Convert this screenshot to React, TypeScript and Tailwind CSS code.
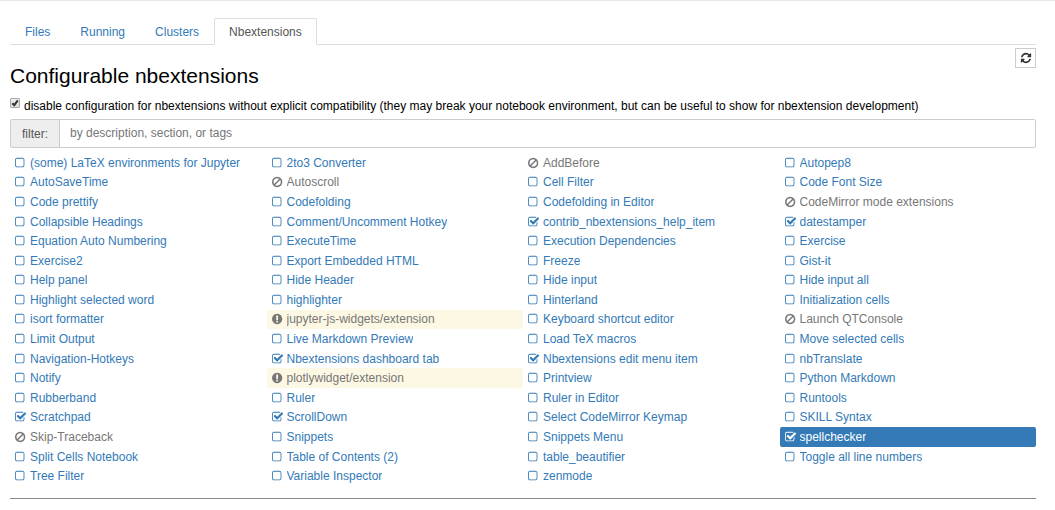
import { useState } from 'react';
import clsx from 'clsx';

type Status = 'off' | 'on' | 'incompatible' | 'missing';

interface Extension {
  name: string;
  status?: Status;
}

const tabs = ['Files', 'Running', 'Clusters', 'Nbextensions'];

// listed row by row, four to a row
const extensions: Extension[] = [
  { name: '(some) LaTeX environments for Jupyter' },
  { name: '2to3 Converter' },
  { name: 'AddBefore', status: 'incompatible' },
  { name: 'Autopep8' },
  { name: 'AutoSaveTime' },
  { name: 'Autoscroll', status: 'incompatible' },
  { name: 'Cell Filter' },
  { name: 'Code Font Size' },
  { name: 'Code prettify' },
  { name: 'Codefolding' },
  { name: 'Codefolding in Editor' },
  { name: 'CodeMirror mode extensions', status: 'incompatible' },
  { name: 'Collapsible Headings' },
  { name: 'Comment/Uncomment Hotkey' },
  { name: 'contrib_nbextensions_help_item', status: 'on' },
  { name: 'datestamper', status: 'on' },
  { name: 'Equation Auto Numbering' },
  { name: 'ExecuteTime' },
  { name: 'Execution Dependencies' },
  { name: 'Exercise' },
  { name: 'Exercise2' },
  { name: 'Export Embedded HTML' },
  { name: 'Freeze' },
  { name: 'Gist-it' },
  { name: 'Help panel' },
  { name: 'Hide Header' },
  { name: 'Hide input' },
  { name: 'Hide input all' },
  { name: 'Highlight selected word' },
  { name: 'highlighter' },
  { name: 'Hinterland' },
  { name: 'Initialization cells' },
  { name: 'isort formatter' },
  { name: 'jupyter-js-widgets/extension', status: 'missing' },
  { name: 'Keyboard shortcut editor' },
  { name: 'Launch QTConsole', status: 'incompatible' },
  { name: 'Limit Output' },
  { name: 'Live Markdown Preview' },
  { name: 'Load TeX macros' },
  { name: 'Move selected cells' },
  { name: 'Navigation-Hotkeys' },
  { name: 'Nbextensions dashboard tab', status: 'on' },
  { name: 'Nbextensions edit menu item', status: 'on' },
  { name: 'nbTranslate' },
  { name: 'Notify' },
  { name: 'plotlywidget/extension', status: 'missing' },
  { name: 'Printview' },
  { name: 'Python Markdown' },
  { name: 'Rubberband' },
  { name: 'Ruler' },
  { name: 'Ruler in Editor' },
  { name: 'Runtools' },
  { name: 'Scratchpad', status: 'on' },
  { name: 'ScrollDown', status: 'on' },
  { name: 'Select CodeMirror Keymap' },
  { name: 'SKILL Syntax' },
  { name: 'Skip-Traceback', status: 'incompatible' },
  { name: 'Snippets' },
  { name: 'Snippets Menu' },
  { name: 'spellchecker', status: 'on' },
  { name: 'Split Cells Notebook' },
  { name: 'Table of Contents (2)' },
  { name: 'table_beautifier' },
  { name: 'Toggle all line numbers' },
  { name: 'Tree Filter' },
  { name: 'Variable Inspector' },
  { name: 'zenmode' },
];

const iconPaths: Record<Status, string> = {
  off: 'M1312 256h-832q-66 0-113 47t-47 113v832q0 66 47 113t113 47h832q66 0 113-47t47-113v-832q0-66-47-113t-113-47zm288 160v832q0 119-84.5 203.5t-203.5 84.5h-832q-119 0-203.5-84.5t-84.5-203.5v-832q0-119 84.5-203.5t203.5-84.5h832q119 0 203.5 84.5t84.5 203.5z',
  on: 'M1472 930v318q0 119-84.5 203.5t-203.5 84.5h-832q-119 0-203.5-84.5t-84.5-203.5v-832q0-119 84.5-203.5t203.5-84.5h832q63 0 117 25 15 7 18 23 3 17-9 29l-49 49q-10 10-23 10-3 0-9-2-23-6-45-6h-832q-66 0-113 47t-47 113v832q0 66 47 113t113 47h832q66 0 113-47t47-113v-254q0-13 9-22l64-64q10-10 23-10 6 0 12 3 20 8 20 29zm231-489l-814 814q-24 24-57 24t-57-24l-430-430q-24-24-24-57t24-57l110-110q24-24 57-24t57 24l263 263 647-647q24-24 57-24t57 24l110 110q24 24 24 57t-24 57z',
  incompatible:
    'M1440 893q0-161-87-295l-754 753q137 89 297 89 111 0 211.5-43.5t173.5-116.5 116-174.5 43-212.5zm-999 299l755-754q-135-91-300-91-148 0-273 73t-198 199-73 274q0 162 89 299zm1223-299q0 157-61 300t-163.5 246-245 164-298.5 61-298.5-61-245-164-163.5-246-61-300 61-299.5 163.5-245.5 245-164 298.5-61 298.5 61 245 164 163.5 245.5 61 299.5z',
  missing:
    'M896 128q209 0 385.5 103t279.5 279.5 103 385.5-103 385.5-279.5 279.5-385.5 103-385.5-103-279.5-279.5-103-385.5 103-385.5 279.5-279.5 385.5-103zm128 1247v-190q0-14-9-23.5t-22-9.5h-192q-13 0-23 10t-10 23v190q0 13 10 23t23 10h192q13 0 22-9.5t9-23.5zm-2-344l18-621q0-12-10-18-10-8-24-8h-220q-14 0-24 8-10 6-10 18l17 621q0 10 10 17.5t24 7.5h185q14 0 23.5-7.5t10.5-17.5z',
};

// each glyph starts at its own left edge
const iconBoxes: Record<Status, string> = {
  off: '192 0 1792 1792',
  on: '64 0 1792 1792',
  incompatible: '128 0 1792 1792',
  missing: '128 0 1792 1792',
};

function StatusIcon({ status }: { status: Status }) {
  return (
    <svg viewBox={iconBoxes[status]} className="size-3 fill-current" aria-hidden="true">
      <path d={iconPaths[status]} />
    </svg>
  );
}

function ExtensionItem({ name, status = 'off', selected, onSelect }: Extension & { selected: boolean; onSelect: () => void }) {
  const [enabled, setEnabled] = useState(status === 'on');
  const unavailable = status === 'incompatible' || status === 'missing';

  return (
    <li
      className={clsx(
        'flex items-center gap-[3px] rounded-[2px] pl-[5px] leading-[18px]',
        selected && 'bg-[#337ab7] text-white',
        !selected && unavailable && 'text-[#777]',
        !selected && !unavailable && 'text-[#337ab7]',
        !selected && status === 'missing' && 'bg-[#fcf8e3]',
      )}
    >
      <span className="relative shrink-0">
        <StatusIcon status={unavailable ? status : enabled ? 'on' : 'off'} />
        {!unavailable && (
          <input
            type="checkbox"
            aria-label={`Enable ${name}`}
            checked={enabled}
            onChange={(e) => setEnabled(e.target.checked)}
            className="absolute inset-0 cursor-pointer appearance-none"
          />
        )}
      </span>
      <a
        href="#"
        onClick={(e) => {
          e.preventDefault();
          onSelect();
        }}
        className="truncate"
      >
        {name}
      </a>
    </li>
  );
}

export default function App() {
  const [hideIncompatible, setHideIncompatible] = useState(true);
  const [filter, setFilter] = useState('');
  const [selected, setSelected] = useState('spellchecker');

  const shown = extensions.filter((ext) => ext.name.toLowerCase().includes(filter.toLowerCase()));

  return (
    <div className="border-t border-[#e7e7e7] bg-white pr-[19px] pl-[10px] font-['Liberation_Sans',Arial,sans-serif] text-[12px] text-black">
      <nav className="mt-[17px] flex border-b border-[#ddd]">
        {tabs.map((tab) => (
          <a
            key={tab}
            href="#"
            className={clsx(
              '-mb-px rounded-t-[2px] border px-[14px] pt-1 pb-[3px] leading-[18px]',
              tab === 'Nbextensions' ? 'border-[#ddd] border-b-white bg-white text-[#555]' : 'border-transparent text-[#337ab7]',
            )}
          >
            {tab}
          </a>
        ))}
      </nav>

      <header className="mt-[3px] flex items-start justify-between">
        <h1 className="mt-[14px] text-[21px] leading-7">Configurable nbextensions</h1>
        <button type="button" aria-label="Refresh" className="flex h-5 w-[21px] items-center justify-center border border-[#ccc] bg-white text-[#333]">
          <svg viewBox="0 0 1792 1792" className="size-3 fill-current" aria-hidden="true">
            <path d="M1639 1056q0 5-1 7-64 268-268 434.500t-478 166.500q-146 0-282.500-55t-243.500-157l-129 129q-19 19-45 19t-45-19-19-45v-448q0-26 19-45t45-19h448q26 0 45 19t19 45-19 45l-137 137q71 66 161 102t187 36q134 0 250-65t186-179q11-17 53-117 8-23 30-23h192q13 0 22.500 9.500t9.500 22.500zm25-800v448q0 26-19 45t-45 19h-448q-26 0-45-19t-19-45 19-45l138-138q-148-137-349-137-134 0-250 65t-186 179q-11 17-53 117-8 23-30 23h-199q-13 0-22.500-9.500t-9.500-22.500v-7q65-268 270-434.500t480-166.500q146 0 284 55.500t245 156.500l130-129q19-19 45-19t45 19 19 45z" />
          </svg>
        </button>
      </header>

      <label className="mt-[7px] flex items-start gap-1 leading-[18px]">
        <span className="relative mt-px size-[10px] shrink-0">
          <input
            type="checkbox"
            checked={hideIncompatible}
            onChange={(e) => setHideIncompatible(e.target.checked)}
            className="block size-[10px] appearance-none rounded-[1px] border border-[#aaa] bg-linear-to-b from-[#eee] to-[#ddd]"
          />
          {hideIncompatible && (
            <svg viewBox="0 0 10 10" className="pointer-events-none absolute inset-0 size-[10px] fill-none stroke-[#333] stroke-2" aria-hidden="true">
              <path d="M2.300 5.200l2 2L7.800 2.400" />
            </svg>
          )}
        </span>
        <span>
          disable configuration for nbextensions without explicit compatibility (they may break your notebook environment, but can be useful to show for nbextension development)
        </span>
      </label>

      <div className="mt-1 flex h-[29px] rounded-[2px] border border-[#ccc]">
        <label htmlFor="filter" className="flex items-center border-r border-[#ccc] bg-[#eee] px-[11px] text-[#555]">
          filter:
        </label>
        <input
          id="filter"
          type="text"
          value={filter}
          onChange={(e) => setFilter(e.target.value)}
          placeholder="by description, section, or tags"
          className="min-w-0 flex-1 px-[10px] pb-[2px] text-[#555] outline-none placeholder:text-[#777]"
        />
      </div>

      <ul className="mt-[5px] grid min-h-[333px] auto-rows-fr grid-cols-4">
        {shown.map((ext) => (
          <ExtensionItem key={ext.name} {...ext} selected={ext.name === selected} onSelect={() => setSelected(ext.name)} />
        ))}
      </ul>

      <hr className="mt-3 border-[#888]" />
    </div>
  );
}
